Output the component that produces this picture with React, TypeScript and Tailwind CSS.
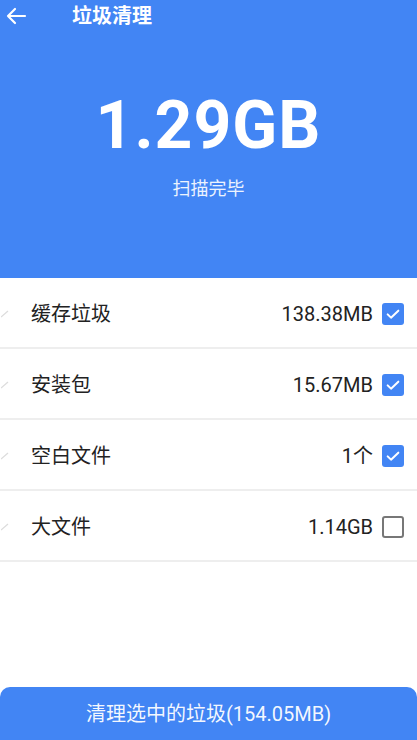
import { useState } from "react";

type Item = { name: string; size: string; checked: boolean };

const initialItems: Item[] = [
  { name: "缓存垃圾", size: "138.38MB", checked: true },
  { name: "安装包", size: "15.67MB", checked: true },
  { name: "空白文件", size: "1个", checked: true },
  { name: "大文件", size: "1.14GB", checked: false },
];

const font = { fontFamily: 'Roboto, "Noto Sans CJK SC", sans-serif' };

export default function App() {
  const [items, setItems] = useState(initialItems);

  function toggle(i: number) {
    setItems(items.map((it, idx) => (idx === i ? { ...it, checked: !it.checked } : it)));
  }

  return (
    <div className="w-[417px] h-[740px] bg-white flex flex-col overflow-hidden" style={font}>
      {/* 顶部蓝色区域 */}
      <div className="h-[278px] bg-[#4285f4] flex flex-col shrink-0">
        <div className="h-[32px] flex items-center">
          <button className="w-[32px] h-[32px] flex items-center justify-center text-white">
            <svg className="w-[24px] h-[24px]" viewBox="0 0 24 24" fill="none" stroke="currentColor" strokeWidth={2.2} strokeLinecap="round" strokeLinejoin="round">
              <path d="M21 12H4M11 5l-7 7 7 7" />
            </svg>
          </button>
          <span className="ml-[40px] text-white text-[20px] font-bold">垃圾清理</span>
        </div>
        <div className="flex flex-col items-center mt-[61px]">
          <div className="text-white text-[66px] font-bold leading-none tracking-[1px]">1.29GB</div>
          <div className="text-white/90 text-[18px] mt-[16px]">扫描完毕</div>
        </div>
      </div>

      {/* 列表 */}
      <div className="flex flex-col">
        {items.map((it, i) => (
          <div key={it.name} className="h-[71px] flex items-center border-b-2 border-[#eeeeee] relative">
            <svg className="absolute left-[1px] top-[32px] w-[8px] h-[8px]" viewBox="0 0 8 8">
              <path d="M0 7L7 1" stroke="#dcdcdc" strokeWidth={1.2} />
            </svg>
            <span className="ml-[31px] text-[20px] text-[#222] mt-[3px]">{it.name}</span>
            <span className="ml-auto text-[20px] text-[#222] mt-[3px]">{it.size}</span>
            <button
              onClick={() => toggle(i)}
              className={`ml-[9px] mr-[13px] w-[22px] h-[22px] rounded-[3px] flex items-center justify-center mt-[2px] ${
                it.checked ? "bg-[#4285f4]" : "border-2 border-[#777] bg-white"
              }`}
            >
              {it.checked && (
                <svg className="w-[16px] h-[16px]" viewBox="0 0 24 24" fill="none" stroke="white" strokeWidth={3} strokeLinecap="round" strokeLinejoin="round">
                  <path d="M4 12.5l5 5L20 7" />
                </svg>
              )}
            </button>
          </div>
        ))}
      </div>

      <div className="flex-1" />

      {/* 底部按钮 */}
      <button className="h-[53px] w-full bg-[#4285f4] rounded-t-[10px] text-white/95 text-[20px] flex items-center justify-center shrink-0">
        清理选中的垃圾(154.05MB)
      </button>
    </div>
  );
}
